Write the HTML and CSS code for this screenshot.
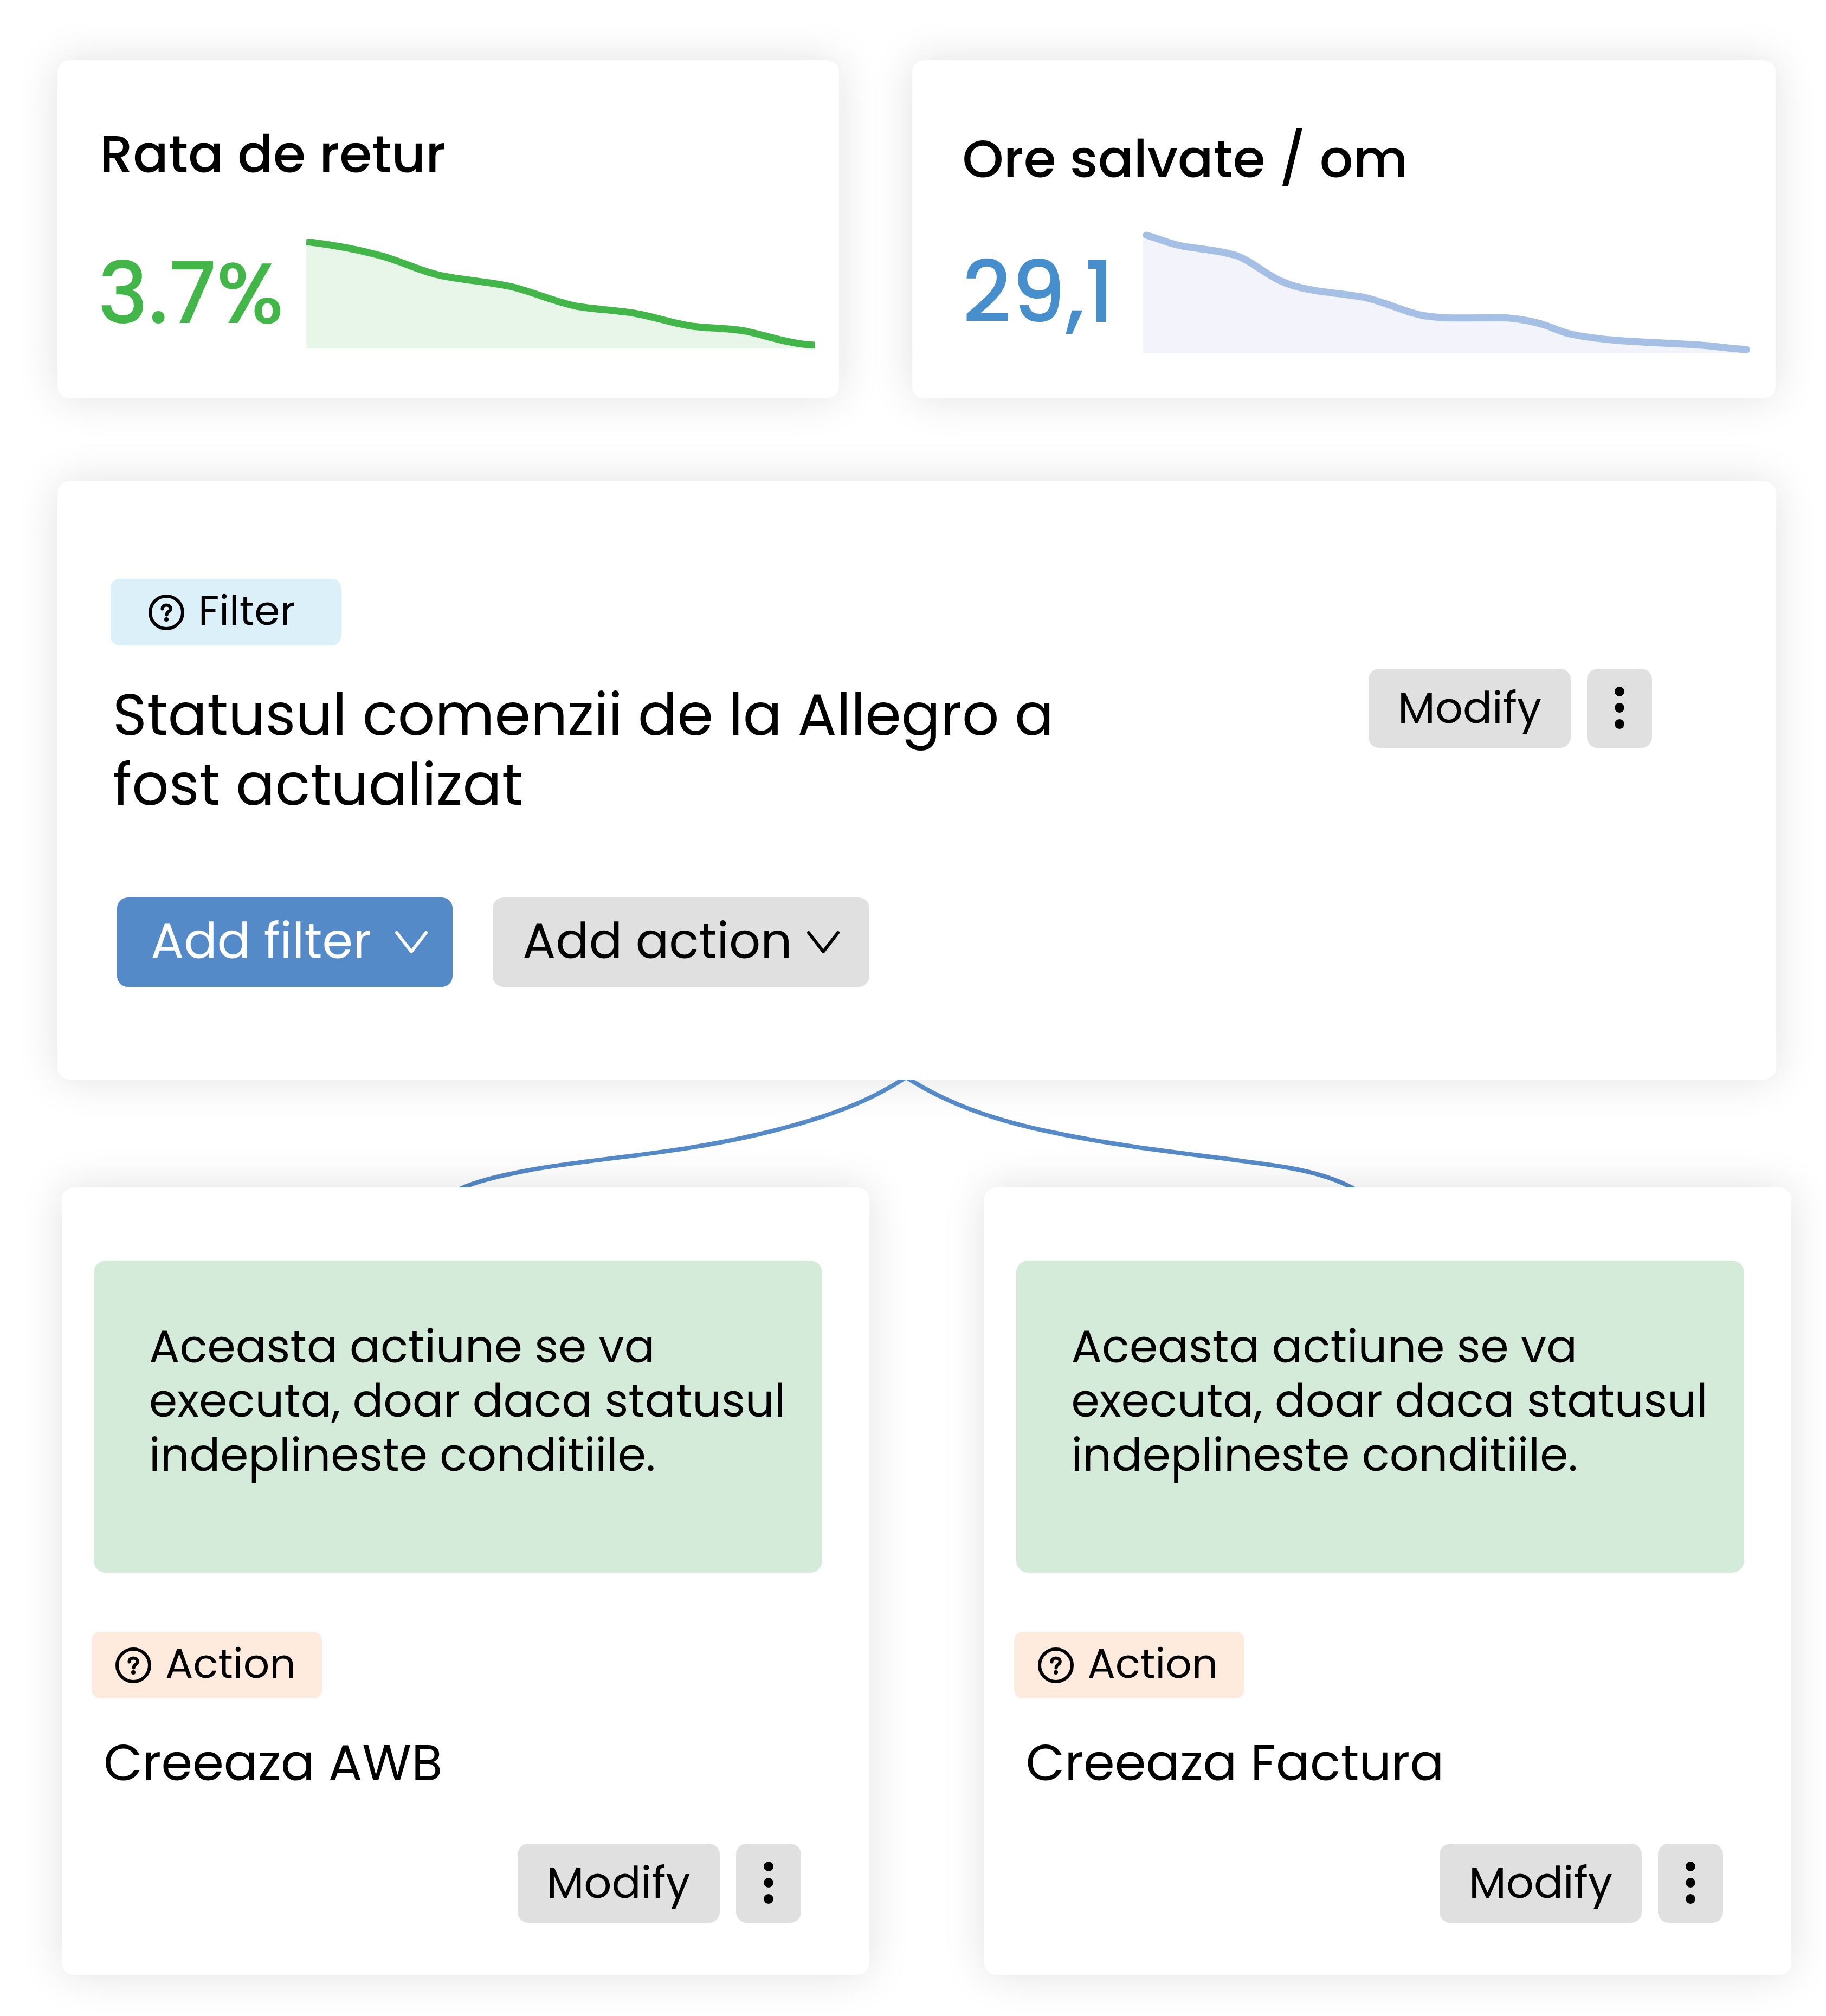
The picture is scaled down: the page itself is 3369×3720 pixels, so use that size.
FILE: index.html
```html
<!DOCTYPE html>
<html lang="ro">
<head>
<meta charset="utf-8">
<meta name="viewport" content="width=device-width, initial-scale=1">
<title>Automatizare comenzi</title>
<link rel="stylesheet" href="styles.css">
</head>
<body>
<svg class="symbols" aria-hidden="true">
  <symbol id="help" viewBox="0 0 66 66">
    <circle cx="33" cy="33" r="30" fill="none" stroke="currentColor" stroke-width="6"/>
    <path d="M25.500 26.500C25.500 22 28.500 19.500 33 19.500C37.500 19.500 40.800 22.200 40.800 26.200C40.800 31.500 33.500 31.500 33.500 37.500" fill="none" stroke="currentColor" stroke-width="6" stroke-linecap="round"/>
    <circle cx="33" cy="46" r="4" fill="currentColor"/>
  </symbol>
  <symbol id="chevron" viewBox="0 0 60 42">
    <path d="M3 3L30 38L57 3" fill="none" stroke="currentColor" stroke-width="6" stroke-linecap="round" stroke-linejoin="round"/>
  </symbol>
  <symbol id="dots" viewBox="0 0 20 80">
    <circle cx="10" cy="10" r="9"/><circle cx="10" cy="40" r="9"/><circle cx="10" cy="70" r="9"/>
  </symbol>
</svg>
<main class="page">
  <section class="metrics">
    <article class="card metric">
      <h2 class="metric-title">Rata de retur</h2>
      <div class="metric-body">
        <p class="metric-value">3.7%</p>
        <svg class="chart" viewBox="0 0 938 202" preserveAspectRatio="none" aria-hidden="true">
          <path fill="#e8f6ea" d="M0 5C50 11 98 20 138 31C175 41 205 57 242 66C284 76 334 78 378 88C420 98 455 115 498 124C532 130 568 131 605 137C645 144 672 155 712 161C745 165 775 164 810 170C845 177 890 194 938 196V202H0Z"/>
          <path fill="none" stroke="#43b649" stroke-width="13" d="M0 5C50 11 98 20 138 31C175 41 205 57 242 66C284 76 334 78 378 88C420 98 455 115 498 124C532 130 568 131 605 137C645 144 672 155 712 161C745 165 775 164 810 170C845 177 890 194 938 196"/>
        </svg>
      </div>
    </article>
    <article class="card metric metric-hours">
      <h2 class="metric-title">Ore salvate / om</h2>
      <div class="metric-body">
        <p class="metric-value">29,1</p>
        <svg class="chart" viewBox="0 0 1119 225" preserveAspectRatio="none" aria-hidden="true">
          <path fill="#f3f4fb" d="M0 6C22 11 42 21 67 26C102 33 140 34 173 45C203 56 225 79 253 91C300 113 358 112 409 122C450 131 490 153 529 157C570 162 610 159 655 159C680 159 720 165 747 175C762 181 776 187 791 190C870 206 960 204 1043 211C1070 214 1092 218 1119 219V225H0Z"/>
          <path fill="none" stroke="#a5bfe5" stroke-width="13" stroke-linecap="round" d="M6 7C25 12 43 21 67 26C102 33 140 34 173 45C203 56 225 79 253 91C300 113 358 112 409 122C450 131 490 153 529 157C570 162 610 159 655 159C680 159 720 165 747 175C762 181 776 187 791 190C870 206 960 204 1043 211C1070 214 1090 217 1113 218"/>
        </svg>
      </div>
    </article>
  </section>

  <section class="card trigger">
    <div class="trigger-head">
      <div class="trigger-text">
        <span class="badge badge-filter"><svg class="badge-icon" aria-hidden="true"><use href="#help"/></svg><span class="label">Filter</span></span>
        <h1 class="trigger-title">Statusul comenzii de la Allegro a fost actualizat</h1>
      </div>
      <div class="actions">
        <button class="button" type="button">Modify</button>
        <button class="button button-more" type="button" aria-label="More"><svg class="dots" aria-hidden="true"><use href="#dots"/></svg></button>
      </div>
    </div>
    <div class="add-row">
      <button class="button button-add button-primary" type="button"><span class="label">Add filter</span><svg class="chevron" aria-hidden="true"><use href="#chevron"/></svg></button>
      <button class="button button-add button-wide" type="button"><span class="label">Add action</span><svg class="chevron" aria-hidden="true"><use href="#chevron"/></svg></button>
    </div>
  </section>

  <svg class="connector" viewBox="0 0 3369 199" preserveAspectRatio="none" aria-hidden="true">
    <path d="M1674 -6C1610 38 1530 70 1400 101C1240 139 1085 146 972 168C920 178 872 189 840 206"/>
    <path d="M1669 -6C1730 34 1810 70 1940 97C2100 131 2260 143 2373 162C2420 170 2467 182 2506 206"/>
  </svg>

  <section class="branches">
    <article class="card branch">
      <p class="note">Aceasta actiune se va executa, doar daca statusul indeplineste conditiile.</p>
      <span class="badge badge-action"><svg class="badge-icon" aria-hidden="true"><use href="#help"/></svg><span class="label">Action</span></span>
      <h2 class="branch-title">Creeaza AWB</h2>
      <div class="actions">
        <button class="button" type="button">Modify</button>
        <button class="button button-more" type="button" aria-label="More"><svg class="dots" aria-hidden="true"><use href="#dots"/></svg></button>
      </div>
    </article>
    <article class="card branch">
      <p class="note">Aceasta actiune se va executa, doar daca statusul indeplineste conditiile.</p>
      <span class="badge badge-action"><svg class="badge-icon" aria-hidden="true"><use href="#help"/></svg><span class="label">Action</span></span>
      <h2 class="branch-title">Creeaza Factura</h2>
      <div class="actions">
        <button class="button" type="button">Modify</button>
        <button class="button button-more" type="button" aria-label="More"><svg class="dots" aria-hidden="true"><use href="#dots"/></svg></button>
      </div>
    </article>
  </section>
</main>
</body>
</html>
```
FILE: styles.css
```css
* {
  box-sizing: border-box;
}

body {
  margin: 0;
  background: #fff;
  color: #000;
  font-family: Poppins, Inter, "Open Sans", sans-serif;
}

h1, h2, p {
  margin: 0;
  font-weight: 400;
}

.symbols {
  display: none;
}

.page {
  padding: 111px 0 76px;
}

.card {
  background: #fff;
  border-radius: 22px;
  box-shadow: 0 0 80px rgba(0, 0, 0, 0.12);
}

.metrics {
  display: grid;
  grid-template-columns: 1442fr 1592fr;
  gap: 135px;
  padding: 0 93px 0 106px;
}

.metric {
  display: flex;
  flex-direction: column;
  justify-content: space-between;
  padding: 113px 45px 92px 74px;
  min-height: 624px;
}

.metric-hours {
  padding: 122px 47px 83px 92px;
}

.metric-title {
  padding-left: 4px;
  font-size: 97px;
  line-height: 120px;
  font-weight: 500;
}

.metric-hours .metric-title {
  padding-left: 0;
}

.metric-body {
  display: flex;
  align-items: center;
}

.metric-value {
  flex: none;
  width: 385px;
  padding-bottom: 2px;
  color: #43b649;
  font-size: 157px;
  line-height: 180px;
  font-weight: 500;
}

.metric-hours .metric-value {
  width: 334px;
  color: #468ecc;
}

.chart {
  display: block;
  flex: 1;
  min-width: 0;
  height: 202px;
}

.metric-hours .chart {
  height: 225px;
}

.trigger {
  margin: 153px 92px 0 106px;
  padding: 180px 229px 171px 98px;
}

.trigger-head {
  display: flex;
  justify-content: space-between;
}

.trigger-title {
  max-width: 1900px;
  margin-top: 63px;
  padding-left: 4px;
  font-size: 107px;
  line-height: 129px;
}

.badge {
  display: flex;
  align-items: center;
  gap: 26px;
  width: 425px;
  height: 123px;
  border-radius: 16px;
  font-size: 76px;
  line-height: 100px;
}

.badge-filter {
  padding-left: 70px;
  background: #dcf0fa;
}

.badge-action {
  padding-left: 44px;
  background: #ffebdd;
}

.badge-icon {
  flex: none;
  width: 66px;
  height: 66px;
}

.label {
  padding-bottom: 6px;
}

.actions {
  display: flex;
  gap: 30px;
}

.trigger .actions {
  margin-top: 166px;
}

.button {
  display: flex;
  align-items: center;
  justify-content: center;
  width: 373px;
  height: 146px;
  padding: 0 0 2px;
  border: 0;
  border-radius: 20px;
  background: #e0e0e0;
  color: #000;
  font: inherit;
  font-size: 80px;
  line-height: 100px;
}

.button-more {
  width: 120px;
}

.dots {
  width: 20px;
  height: 80px;
}

.add-row {
  display: flex;
  gap: 74px;
  margin-top: 144px;
  padding-left: 12px;
}

.button-add {
  justify-content: space-between;
  width: 619px;
  height: 165px;
  padding: 0 46px 0 62px;
  font-size: 91px;
}

.button-primary {
  background: #558ac9;
  color: #fff;
}

.button-wide {
  width: 695px;
  padding: 0 55px;
}

.chevron {
  flex: none;
  width: 60px;
  height: 42px;
}

.connector {
  display: block;
  width: 100%;
  height: 199px;
  fill: none;
  stroke: #558ac9;
  stroke-width: 8px;
}

.branches {
  display: grid;
  grid-template-columns: 1fr 1fr;
  gap: 212px;
  padding: 0 64px 0 114px;
}

.branch {
  padding: 135px 87px 96px 55px;
}

.note {
  min-height: 576px;
  margin: 0 0 109px 4px;
  padding: 109px 40px 107px 102px;
  border-radius: 22px;
  background: #d4ebda;
  font-size: 84px;
  line-height: 100px;
}

.branch-title {
  margin: 64px 0 94px;
  padding-left: 22px;
  font-size: 93px;
  line-height: 110px;
}

.branch .actions {
  justify-content: flex-end;
  padding-right: 39px;
}
```
